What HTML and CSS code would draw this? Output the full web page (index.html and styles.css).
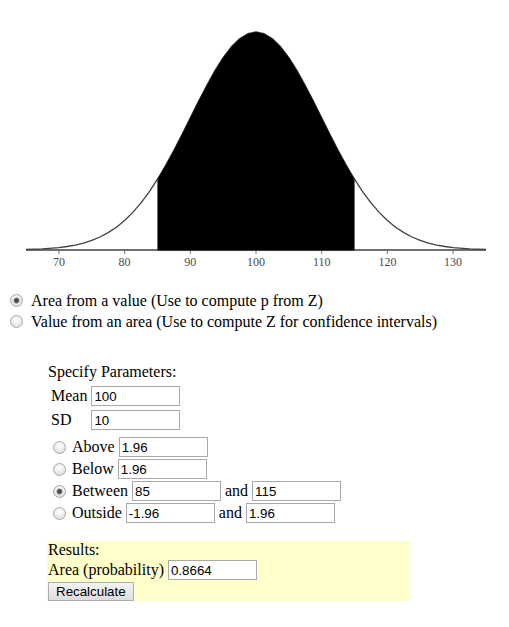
FILE: index.html
```html
<!DOCTYPE html>
<html>
<head>
<meta charset="utf-8">
<title>Normal Distribution Calculator</title>
<link rel="stylesheet" href="styles.css">
</head>
<body>
<svg class="chart" viewBox="0 0 509 290" xmlns="http://www.w3.org/2000/svg">
  <line class="axis" x1="26" y1="250" x2="486" y2="250"/>
  <g class="ticks">
    <line x1="58.9" y1="250" x2="58.9" y2="254"/>
    <line x1="124.6" y1="250" x2="124.6" y2="254"/>
    <line x1="190.3" y1="250" x2="190.3" y2="254"/>
    <line x1="256" y1="250" x2="256" y2="254"/>
    <line x1="321.7" y1="250" x2="321.7" y2="254"/>
    <line x1="387.4" y1="250" x2="387.4" y2="254"/>
    <line x1="453.1" y1="250" x2="453.1" y2="254"/>
  </g>
  <g class="labels">
    <text x="58.9" y="266">70</text>
    <text x="124.6" y="266">80</text>
    <text x="190.3" y="266">90</text>
    <text x="256" y="266">100</text>
    <text x="321.7" y="266">110</text>
    <text x="387.4" y="266">120</text>
    <text x="453.1" y="266">130</text>
  </g>
  <polyline class="curve" points="26.05,249.52 42.47,248.89 58.9,247.58 67.11,246.50 75.32,245.03 83.54,243.05 91.75,240.42 99.96,237.01 108.17,232.66 116.39,227.20 124.6,220.50 132.81,212.41 141.02,202.85 149.24,191.78 157.45,179.23 165.66,165.29 173.87,150.19 182.09,134.22 190.3,117.78 198.51,101.34 206.72,85.45 214.94,70.68 223.15,57.62 231.36,46.80 239.57,38.71 247.79,33.70 256,32 264.21,33.70 272.43,38.71 280.64,46.80 288.85,57.62 297.06,70.68 305.28,85.45 313.49,101.34 321.7,117.78 329.91,134.22 338.13,150.19 346.34,165.29 354.55,179.23 362.76,191.78 370.98,202.85 379.19,212.41 387.4,220.50 395.61,227.20 403.83,232.66 412.04,237.01 420.25,240.42 428.46,243.05 436.68,245.03 444.89,246.50 453.1,247.58 469.53,248.89 485.95,249.52"/>
  <polygon class="area" points="157.45,250.5 157.45,179.23 165.66,165.29 173.87,150.19 182.09,134.22 190.3,117.78 198.51,101.34 206.72,85.45 214.94,70.68 223.15,57.62 231.36,46.80 239.57,38.71 247.79,33.70 256,32 264.21,33.70 272.43,38.71 280.64,46.80 288.85,57.62 297.06,70.68 305.28,85.45 313.49,101.34 321.7,117.78 329.91,134.22 338.13,150.19 346.34,165.29 354.55,179.23 354.55,250.5"/>
</svg>

<form class="mode">
  <label class="opt"><input class="radio top" type="radio" name="mode" checked><span>Area from a value (Use to compute p from Z)</span></label>
  <label class="opt"><input class="radio top" type="radio" name="mode"><span>Value from an area (Use to compute Z for confidence intervals)</span></label>
</form>

<div class="params">
  <div class="title">Specify Parameters:</div>
  <div class="fields">
    <span class="flabel">Mean</span><input class="num" type="text" value="100">
    <span class="flabel">SD</span><input class="num" type="text" value="10">
  </div>
  <div class="choices">
    <label class="choice"><input class="radio" type="radio" name="region"><span>Above</span><input class="num" type="text" value="1.96"></label>
    <label class="choice"><input class="radio" type="radio" name="region"><span>Below</span><input class="num" type="text" value="1.96"></label>
    <label class="choice"><input class="radio" type="radio" name="region" checked><span>Between</span><input class="num" type="text" value="85"><span>and</span><input class="num" type="text" value="115"></label>
    <label class="choice"><input class="radio" type="radio" name="region"><span>Outside</span><input class="num" type="text" value="-1.96"><span>and</span><input class="num" type="text" value="1.96"></label>
  </div>
</div>

<div class="results">
  <div class="res-title">Results:</div>
  <div class="res-row"><span>Area (probability)</span><input class="num" type="text" value="0.8664"></div>
  <div class="res-btn"><button class="btn" type="button">Recalculate</button></div>
</div>
</body>
</html>
```

FILE: styles.css
```css
html, body {
  margin: 0;
  padding: 0;
  background: #ffffff;
}

body {
  font-family: "Liberation Serif", "Times New Roman", serif;
  font-size: 16px;
  color: #000000;
}

/* chart */
.chart {
  display: block;
  width: 509px;
  height: 290px;
}

.axis {
  stroke: #707070;
  stroke-width: 2;
}

.ticks line {
  stroke: #707070;
  stroke-width: 1;
}

.labels text {
  font-family: "Liberation Serif", "Times New Roman", serif;
  font-size: 12px;
  fill: #4a4a4a;
  text-anchor: middle;
}

.curve {
  fill: none;
  stroke: #404040;
  stroke-width: 1.3;
  stroke-linejoin: round;
}

.area {
  fill: #000000;
  stroke: none;
}

/* radio buttons */
.radio {
  appearance: none;
  -webkit-appearance: none;
  width: 13px;
  height: 13px;
  margin: 0 2px 0 5px;
  flex: none;
  box-sizing: border-box;
  border: 1px solid #a8a8a8;
  border-radius: 50%;
  background: radial-gradient(circle at 50% 35%, #ffffff 0, #eeeeee 45%, #d4d4d4 100%);
}

.radio:checked {
  background:
    radial-gradient(circle at 50% 50%, #444444 0, #505050 1.6px, #808080 2.6px, rgba(255,255,255,0) 3.4px),
    radial-gradient(circle at 50% 35%, #ffffff 0, #eeeeee 45%, #d4d4d4 100%);
}

.radio.top {
  margin: 0 4px 0 10px;
}

/* mode choice */
.mode {
  display: flex;
  flex-direction: column;
  margin: 0;
}

.opt {
  display: flex;
  align-items: center;
  gap: 4px;
  height: 21px;
  line-height: 18px;
}

/* text inputs */
.num {
  width: 89px;
  height: 20px;
  margin: 0;
  padding: 0 2px;
  box-sizing: border-box;
  border: 1px solid #a9a9a9;
  background: #ffffff;
  font-family: "Liberation Sans", Arial, sans-serif;
  font-size: 13.333px;
  color: #000000;
  flex: none;
}

/* parameters */
.params {
  margin: 31px 0 0 48px;
}

.title {
  height: 21px;
  line-height: 18px;
}

.fields {
  display: grid;
  grid-template-columns: auto auto;
  grid-auto-rows: 24px;
  justify-content: start;
  align-items: center;
  column-gap: 4px;
  padding-left: 3px;
}

.flabel {
  line-height: 18px;
}

.choices {
  margin-top: 4px;
  display: flex;
  flex-direction: column;
}

.choice {
  display: flex;
  align-items: center;
  gap: 4px;
  height: 22px;
  line-height: 18px;
}

/* results */
.results {
  margin: 17px 0 0 47px;
  width: 363px;
  padding-left: 1px;
  box-sizing: border-box;
  background: #ffffcc;
}

.res-title {
  height: 18px;
  line-height: 18px;
}

.res-row {
  display: flex;
  align-items: center;
  gap: 4px;
  height: 22px;
  line-height: 18px;
}

.res-btn {
  height: 20px;
  display: flex;
  align-items: flex-end;
}

.btn {
  height: 19px;
  margin: 0;
  padding: 0 7px;
  box-sizing: border-box;
  border: 1px solid #adadad;
  border-radius: 0;
  background: linear-gradient(#f4f4f4, #dddddd);
  font-family: "Liberation Sans", Arial, sans-serif;
  font-size: 13.333px;
  color: #000000;
  line-height: 15px;
}
```
